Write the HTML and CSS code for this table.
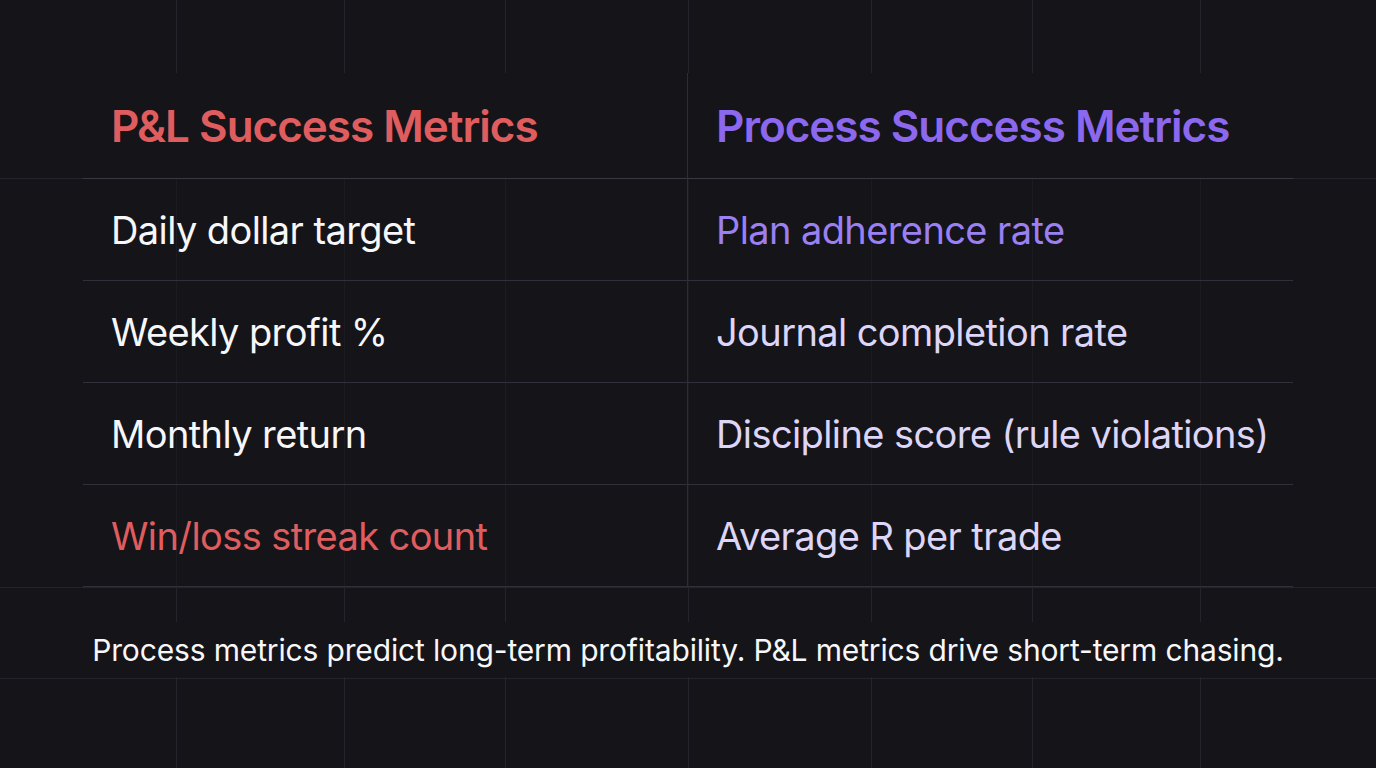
FILE: index.html
```html
<!DOCTYPE html>
<html lang="en">
<head>
<meta charset="utf-8">
<title>P&amp;L vs Process Success Metrics</title>
<link rel="stylesheet" href="styles.css">
</head>
<body>
<main class="slide">
  <section class="metrics">
    <div class="cell head head-pl">P&amp;L Success Metrics</div>
    <div class="cell head head-proc">Process Success Metrics</div>

    <div class="cell pl">Daily dollar target</div>
    <div class="cell proc proc-accent">Plan adherence rate</div>

    <div class="cell pl">Weekly profit %</div>
    <div class="cell proc">Journal completion rate</div>

    <div class="cell pl">Monthly return</div>
    <div class="cell proc">Discipline score (rule violations)</div>

    <div class="cell pl pl-accent">Win/loss streak count</div>
    <div class="cell proc">Average R per trade</div>
  </section>
  <p class="footer">Process metrics predict long-term profitability. P&amp;L metrics drive short-term chasing.</p>
</main>
</body>
</html>
```

FILE: styles.css
```css
html, body {
  margin: 0;
  padding: 0;
}

body {
  width: 1376px;
  height: 768px;
  overflow: hidden;
  font-family: "Inter", "Noto Sans", "Liberation Sans", sans-serif;
  background-color: #141419;
  background-image:
    linear-gradient(#24242c, #24242c),
    linear-gradient(#24242c, #24242c),
    linear-gradient(#24242c, #24242c),
    linear-gradient(#24242c, #24242c),
    linear-gradient(#24242c, #24242c),
    linear-gradient(#24242c, #24242c),
    linear-gradient(#24242c, #24242c),
    linear-gradient(#24242c, #24242c),
    linear-gradient(#24242c, #24242c),
    linear-gradient(#24242c, #24242c);
  background-position:
    176px 0, 344px 0, 505px 0, 688px 0, 871px 0, 1032px 0, 1200px 0,
    0 178px, 0 587px, 0 678px;
  background-size:
    1px 100%, 1px 100%, 1px 100%, 1px 100%, 1px 100%, 1px 100%, 1px 100%,
    100% 1px, 100% 1px, 100% 1px;
  background-repeat: no-repeat;
}

.slide {
  padding-top: 73px;
}

.metrics {
  margin-left: 83px;
  width: 1210px;
  display: grid;
  grid-template-columns: 605px 605px;
  grid-template-rows: 106px repeat(4, 102px);
}

.cell {
  display: flex;
  align-items: center;
  border-bottom: 1px solid #30303b;
  background: rgba(20, 20, 25, 0.55);
  font-size: 38px;
  letter-spacing: -0.6px;
  white-space: nowrap;
}

.cell:nth-child(odd) {
  padding-left: 28px;
  border-right: 1px solid #2d2d38;
}

.cell:nth-child(even) {
  padding-left: 28px;
}

.head {
  background: #141419;
  font-size: 44px;
  font-weight: 600;
  letter-spacing: -1px;
  border-bottom-color: #393945;
}

.head-pl {
  color: #e05d5f;
}

.head-proc {
  color: #8b68ee;
}

.pl {
  color: #f7f7f9;
}

.pl-accent {
  color: #e05d5f;
}

.proc {
  color: #ddd6f8;
}

.proc-accent {
  color: #9a80f2;
}

.footer {
  margin: 35px 0 0;
  height: 55px;
  display: flex;
  align-items: center;
  justify-content: center;
  background: #141419;
  color: #f7f7f9;
  font-size: 30px;
  letter-spacing: -0.15px;
}
```
